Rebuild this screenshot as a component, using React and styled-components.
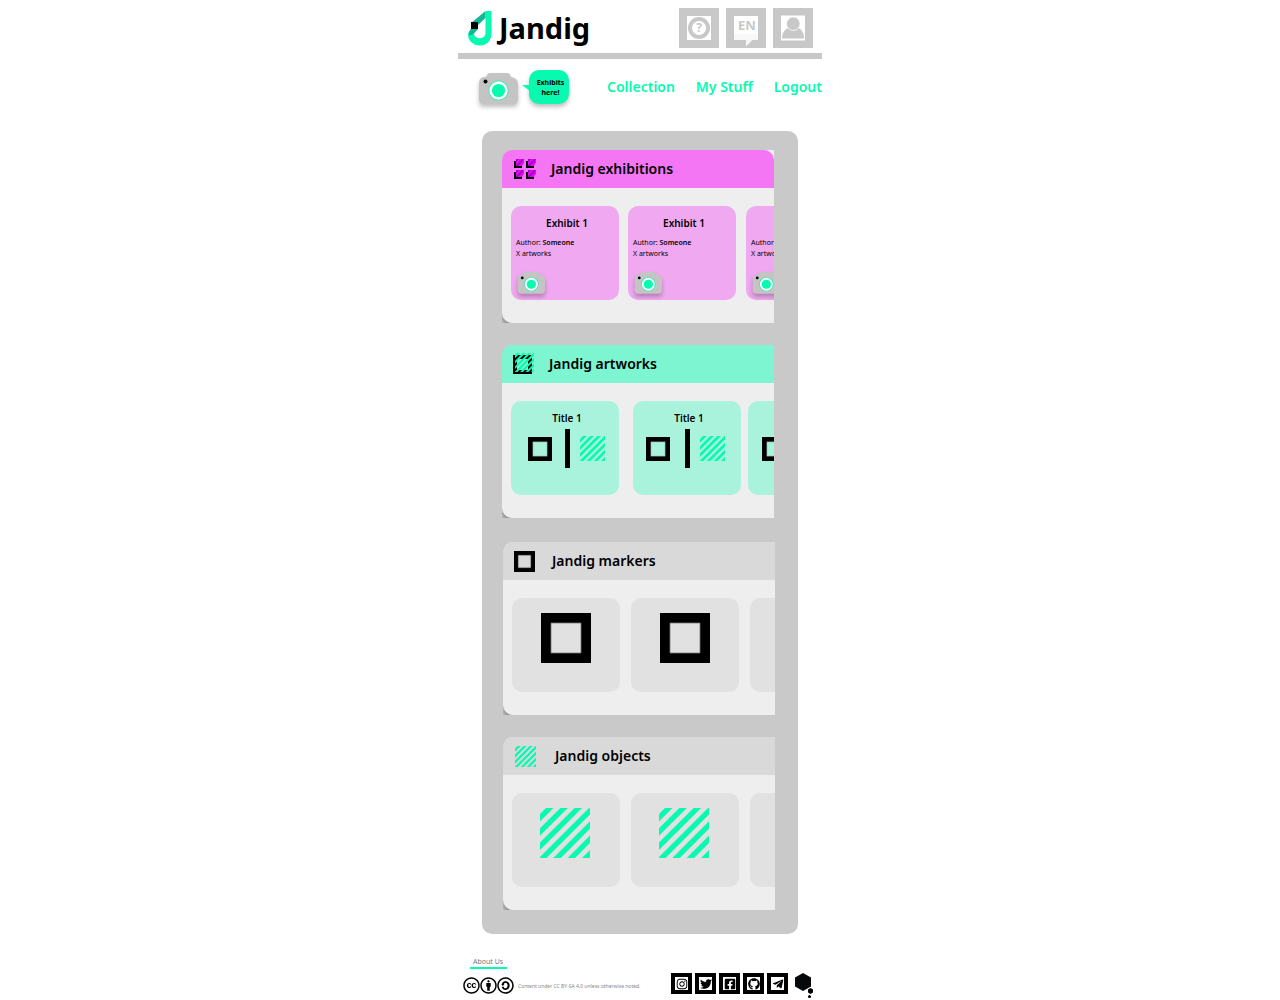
import React from "react";
import styled, { createGlobalStyle } from "styled-components";
import {
  FaCreativeCommons,
  FaCreativeCommonsBy,
  FaCreativeCommonsSa,
  FaInstagram,
  FaTwitter,
  FaFacebookSquare,
  FaGithub,
  FaTelegramPlane,
} from "react-icons/fa";

const GREEN = "#08f9b0";
const GREY = "#c8c8c8";

const GlobalStyle = createGlobalStyle`
  * { box-sizing: border-box; }
  body {
    margin: 0;
    background: #fff;
    color: #000;
    font-family: "Noto Sans", "Open Sans", sans-serif;
  }
  h2, h3, p { margin: 0; }
  svg { display: block; flex: none; }
  a { color: inherit; text-decoration: none; }
  button { font-family: inherit; }
`;

const Page = styled.div`
  max-width: 364px;
  margin: 0 auto;
`;

const Header = styled.header`
  display: flex;
  align-items: center;
  justify-content: space-between;
  padding: 8px 9px 5px 10px;
  border-bottom: 6px solid ${GREY};
`;

const Brand = styled.a`
  display: flex;
  align-items: center;
  gap: 7px;
  height: 40px;
  font-size: 29px;
  line-height: 40px;
  font-weight: 700;
`;

const Tools = styled.div`
  display: flex;
  gap: 7px;
`;

const ToolButton = styled.button`
  width: 40px;
  height: 40px;
  padding: 0;
  border: 0;
  background: ${GREY};
  cursor: pointer;
`;

const NavRow = styled.div`
  display: flex;
  align-items: flex-start;
  padding: 11px 0 0 20px;
`;

const CameraLink = styled.a`
  padding-top: 3px;
`;

const Bubble = styled.a`
  position: relative;
  width: 40px;
  height: 34px;
  margin-left: 11px;
  padding: 8px 0 0 3px;
  border-radius: 10px;
  background: ${GREEN};
  box-shadow: 0 3px 4px rgba(0, 0, 0, 0.25);
  font-size: 7px;
  line-height: 10px;
  font-weight: 700;
  text-align: center;

  &::before {
    content: "";
    position: absolute;
    left: -7px;
    top: 15px;
    border-bottom: 6px solid transparent;
    border-right: 8px solid ${GREEN};
  }
`;

const Nav = styled.nav`
  display: flex;
  flex: 1;
  justify-content: space-between;
  margin-left: 38px;
  padding-top: 7px;
  color: ${GREEN};
  font-size: 14px;
  line-height: 20px;
  font-weight: 600;
  white-space: nowrap;
`;

const Board = styled.main`
  display: grid;
  gap: 24px;
  margin: 26px 24px 0;
  padding: 19px 20px 24px;
  border-radius: 10px;
  background: #c9c9c9;
`;

const Group = styled.div`
  display: grid;
  gap: 22px;
  min-width: 0;
  padding: ${(p) => (p.$shifted ? "0 3px 0 1px" : "0 4px 0 0")};
`;

const Shelf = styled.section`
  min-width: 0;
  overflow: hidden;
`;

const ShelfPanel = styled.div`
  border-radius: 10px 0 0 10px;
  background: #eee;
  box-shadow: 0 4px 4px rgba(0, 0, 0, 0.3);
`;

const ShelfHead = styled.div`
  display: flex;
  align-items: center;
  gap: ${(p) => p.$gap}px;
  height: 38px;
  padding-left: ${(p) => p.$inset}px;
  border-radius: ${(p) => (p.$rounded ? "10px 10px 0 0" : "10px 0 0 0")};
  background: ${(p) => p.$color};
`;

const ShelfTitle = styled.h2`
  font-size: 14px;
  line-height: 20px;
  font-weight: 600;
  white-space: nowrap;
`;

const Cards = styled.div`
  display: grid;
  grid-template-columns: ${(p) => p.$columns};
  padding: 18px 0 23px 9px;
`;

const Card = styled.article`
  width: 108px;
  height: 94px;
  border-radius: 10px;
  background: ${(p) => p.$color};
`;

const CardTitle = styled.h3`
  height: 25px;
  padding: 9px 0 0 4px;
  font-size: 10px;
  line-height: 16px;
  font-weight: 600;
  text-align: center;
`;

const Details = styled.div`
  padding: 6px 0 0 5px;
  font-size: 7px;
  line-height: 11px;
  white-space: nowrap;

  b { font-weight: 600; }
`;

const SmallCamera = styled.div`
  padding: 13px 0 0 6px;
`;

const Pair = styled.div`
  display: flex;
  align-items: center;
  padding: 3px 0 0 ${(p) => p.$inset}px;
`;

const Divider = styled.span`
  width: 5px;
  height: 39px;
  margin: 0 10px 0 ${(p) => p.$before}px;
  background: #000;
`;

const Stage = styled.div`
  display: flex;
  justify-content: center;
  padding: 15px ${(p) => (p.$leaning ? 2 : 0)}px 0 0;
`;

const Footer = styled.footer`
  display: flex;
  justify-content: space-between;
  align-items: flex-end;
  padding: 23px 9px 0 5px;
`;

const Legal = styled.div`
  display: flex;
  flex-direction: column;
  align-items: flex-start;
  gap: 8px;
  padding-bottom: 4px;
`;

const AboutLink = styled.a`
  margin-left: 7px;
  padding: 0 4px 0 3px;
  border-bottom: 2px solid ${GREEN};
  color: #777;
  font-size: 7px;
  line-height: 10px;
`;

const License = styled.div`
  display: flex;
  align-items: center;
  color: #888;
  font-size: 5px;
  line-height: 8px;
  white-space: nowrap;
`;

const Marks = styled.span`
  display: flex;
  margin-right: 4px;
  color: #000;
`;

const Social = styled.div`
  display: flex;
  align-items: flex-start;
  gap: 3px;
`;

const SocialLink = styled.a`
  display: flex;
  align-items: center;
  justify-content: center;
  width: 21px;
  height: 21px;
  border: 4px solid #000;
  background: #fff;
`;

const Partner = styled.a`
  margin-left: 4px;
`;

function Logo() {
  return (
    <svg width="24" height="36" viewBox="0 -1 24 36" aria-hidden="true">
      <path d="M17.500 0H23.500V23A11.700 11 0 0 1 0 24Q0 21 3 18l6 1Q6 21 6 23.500A6 5.500 0 0 0 17.500 23z" fill={GREEN} />
      <path d="M17.500 0v7L10 14H3v-2zM3 18h7l-6 6H.5Q.5 21 3 18z" fill="#12b894" />
      <path d="M3 11h7v7H3z" />
    </svg>
  );
}

function HelpIcon() {
  return (
    <svg width="40" height="40" viewBox="0 0 40 40" aria-hidden="true">
      <path d="M8 8h24v24H8z" fill="#fff" />
      <circle cx="20" cy="20" r="9" fill="#fff" stroke={GREY} strokeWidth="4" />
      <text x="20" y="24" textAnchor="middle" fill={GREY} fontSize="12" fontWeight="700">?</text>
    </svg>
  );
}

function LanguageIcon() {
  return (
    <svg width="40" height="40" viewBox="0 0 40 40" aria-hidden="true">
      <path d="M8 8h24v24h-6l-6 6v-6H8z" fill="#fff" />
      <path d="M8 26h24v6h-6l-6 6v-6H8z" fill="#f8f8f8" />
      <text x="12" y="22" fill={GREY} fontSize="13" fontWeight="700">EN</text>
    </svg>
  );
}

function UserIcon() {
  return (
    <svg width="40" height="40" viewBox="0 0 40 40" aria-hidden="true">
      <path d="M8 7.500h24v25H8z" fill="#fff" />
      <path d="M9 30.500c0-6 3-9.500 6.500-10.500h9.500c3.500 1 6 4.500 6 10.500z" fill={GREY} />
      <circle cx="20.300" cy="15.700" r="6.800" fill={GREY} stroke="#fff" strokeWidth=".8" />
    </svg>
  );
}

const CameraSvg = styled.svg`
  overflow: visible;
  filter: drop-shadow(0 3px 2px rgba(0, 0, 0, 0.25));
`;

function Camera({ width = 40 }) {
  return (
    <CameraSvg width={width} height={(width * 32) / 40} viewBox="0 0 40 32" aria-hidden="true">
      <path d="M7 4q2 0 2-2 1-2 3-2h17q3 0 4 4c5 1 7 3 7 8v14q0 5-5 5H6q-5 0-5-5V11c0-5 2-7 6-7z" fill="#c4c4c4" />
      <circle cx="20.500" cy="17.500" r="10" fill={GREEN} />
      <circle cx="20.500" cy="17.500" r="9.200" fill="#fff" />
      <circle cx="20.500" cy="17.500" r="6.600" fill={GREEN} />
      <circle cx="7.500" cy="8.500" r="2" />
    </CameraSvg>
  );
}

const bands = [6, 20.3, 34.6, 49, 63.3, 77.6, 92];

function bandPath(start) {
  const end = start + 7.5;
  const edge = (c) => (c <= 50 ? [[c, 0], [0, c]] : [[50, c - 50], [c - 50, 50]]);
  const [a, b] = edge(start);
  const [c, d] = edge(Math.min(end, 100));
  const middle = start < 50 && end > 50;
  const points = middle ? [a, [50, 0], c, d, [0, 50], b] : [a, c, d, b];
  return points.map((p) => p.join(",")).join(" ");
}

function Stripes({ size, color = GREEN, ...rest }) {
  return (
    <svg width={size} height={size} viewBox="0 0 50 50" aria-hidden="true" {...rest}>
      {bands.map((start) => (
        <polygon key={start} points={bandPath(start)} fill={color} />
      ))}
    </svg>
  );
}

function Marker({ size }) {
  return (
    <svg width={size} height={size} viewBox="0 0 50 50" aria-hidden="true">
      <path d="M0 0h50v50H0zM10 10v30h30V10z" fillRule="evenodd" />
      <path d="M10 10h30v30H10z" fill="none" stroke="#777" strokeWidth=".8" />
    </svg>
  );
}

function ExhibitionIcon() {
  return (
    <svg width="23" height="22" viewBox="0 0 23 22" aria-hidden="true">
      {[[1, 1], [13, 1], [1, 12], [13, 12]].map(([x, y]) => (
        <g key={`${x}-${y}`} transform={`translate(${x} ${y})`}>
          <path d="M0 2h8v7H0z" />
          <path d="M2 0h8L8 7H2z" fill="#9a05cf" />
          <path d="M2 3l3-3h3L2 6zM4 7l6-6v3L7 7z" fill="#f004f0" />
        </g>
      ))}
    </svg>
  );
}

function ArtworkIcon() {
  return (
    <svg width="22" height="22" viewBox="0 0 22 22" aria-hidden="true">
      <path d="M0 2h19v19H0zM4 6v11h11V6z" fillRule="evenodd" />
      <Stripes size={19} x="2" y="0" />
    </svg>
  );
}

function PartnerIcon() {
  return (
    <svg width="18" height="25" viewBox="0 0 18 25" aria-hidden="true">
      <path d="M8 0l8 4.500v9L8 18l-8-4.500v-9z" fill="#05090b" />
      <path d="M15.500 15l2.500 1.500v3L15.500 21 13 19.500v-3zM14.500 22l1.500 1v1.500l-1.500.5-1.500-.5V23z" />
    </svg>
  );
}

function ShelfBlock({ title, icon, color, gap, inset = 11, rounded, columns, children }) {
  return (
    <Shelf>
      <ShelfPanel>
        <ShelfHead $color={color} $gap={gap} $inset={inset} $rounded={rounded}>
          {icon}
          <ShelfTitle>{title}</ShelfTitle>
        </ShelfHead>
        <Cards $columns={columns}>{children}</Cards>
      </ShelfPanel>
    </Shelf>
  );
}

const exhibits = [
  { title: "Exhibit 1", author: "Someone" },
  { title: "Exhibit 1", author: "Someone" },
  {},
];

const artworks = [
  { title: "Title 1", inset: 17, before: 13 },
  { title: "Title 1", inset: 13, before: 15 },
  { inset: 14, before: 15 },
];

const socials = [
  ["Instagram", FaInstagram],
  ["Twitter", FaTwitter],
  ["Facebook", FaFacebookSquare],
  ["GitHub", FaGithub],
  ["Telegram", FaTelegramPlane],
];

export default function App() {
  return (
    <>
      <GlobalStyle />
      <Page>
        <Header>
          <Brand href="#home"><Logo />Jandig</Brand>
          <Tools>
            <ToolButton aria-label="Help"><HelpIcon /></ToolButton>
            <ToolButton aria-label="Language"><LanguageIcon /></ToolButton>
            <ToolButton aria-label="Profile"><UserIcon /></ToolButton>
          </Tools>
        </Header>
        <NavRow>
          <CameraLink href="#camera" aria-label="Camera"><Camera /></CameraLink>
          <Bubble href="#exhibits">Exhibits<br />here!</Bubble>
          <Nav>
            <a href="#collection">Collection</a>
            <a href="#stuff">My Stuff</a>
            <a href="#logout">Logout</a>
          </Nav>
        </NavRow>
        <Board>
          <Group>
            <ShelfBlock title="Jandig exhibitions" icon={<ExhibitionIcon />} color="#f576f5" gap={15} rounded columns="117px 118px 108px">
              {exhibits.map((exhibit, i) => (
                <Card key={i} $color="#f0a8f0">
                  <CardTitle>{exhibit.title}</CardTitle>
                  <Details>
                    <p>Author: <b>{exhibit.author}</b></p>
                    <p>X artworks</p>
                  </Details>
                  <SmallCamera><Camera width={28} /></SmallCamera>
                </Card>
              ))}
            </ShelfBlock>
            <ShelfBlock title="Jandig artworks" icon={<ArtworkIcon />} color="#7cf5d0" gap={14} columns="122px 115px 108px">
              {artworks.map((art, i) => (
                <Card key={i} $color="#a9f3dc">
                  <CardTitle>{art.title}</CardTitle>
                  <Pair $inset={art.inset}>
                    <Marker size={24} />
                    <Divider $before={art.before} />
                    <Stripes size={25} />
                  </Pair>
                </Card>
              ))}
            </ShelfBlock>
          </Group>
          <Group $shifted>
            <ShelfBlock title="Jandig markers" icon={<Marker size={21} />} color="#d9d9d9" gap={17} columns="119px 119px 108px">
              {[0, 1, 2].map((i) => (
                <Card key={i} $color="#e1e1e1"><Stage><Marker size={50} /></Stage></Card>
              ))}
            </ShelfBlock>
            <ShelfBlock title="Jandig objects" icon={<Stripes size={21} />} color="#d9d9d9" inset={12} gap={19} columns="119px 119px 108px">
              {[0, 1, 2].map((i) => (
                <Card key={i} $color="#e1e1e1"><Stage $leaning><Stripes size={50} /></Stage></Card>
              ))}
            </ShelfBlock>
          </Group>
        </Board>
        <Footer>
          <Legal>
            <AboutLink href="#about">About Us</AboutLink>
            <License>
              <Marks>
                <FaCreativeCommons size={17} />
                <FaCreativeCommonsBy size={17} />
                <FaCreativeCommonsSa size={17} />
              </Marks>
              Content under CC BY-SA 4.0 unless otherwise noted.
            </License>
          </Legal>
          <Social>
            {socials.map(([name, Icon]) => (
              <SocialLink key={name} href={`#${name.toLowerCase()}`} aria-label={name}><Icon size={12} /></SocialLink>
            ))}
            <Partner href="#partner" aria-label="Partner"><PartnerIcon /></Partner>
          </Social>
        </Footer>
      </Page>
    </>
  );
}
